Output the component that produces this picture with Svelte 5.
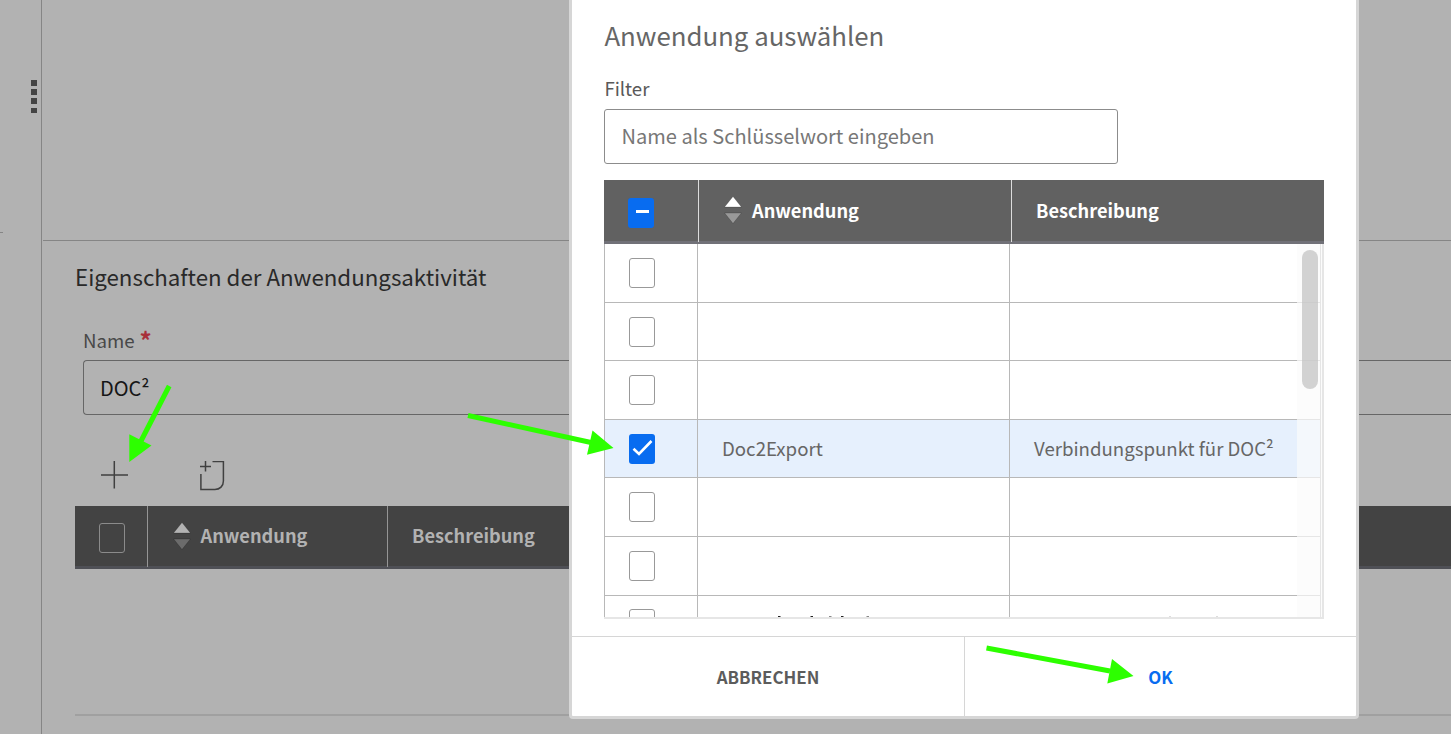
<script>
  const rows = [
    { h: 59 },
    { h: 58 },
    { h: 59 },
    { h: 58, name: 'Doc2Export', text: 'Verbindungspunkt für DOC²', checked: true },
    { h: 59 },
    { h: 59 },
    { h: 59, clipped: true }
  ];
</script>

{#snippet sorter()}
  <svg class="sorter" width="18" height="28" viewBox="0 0 18 28">
    <path class="down" d="M.6 17h16.800l-8.400 10.500z" />
    <path class="up" d="M.6 11h16.800L9 .5z" />
  </svg>
{/snippet}

<div class="page">
  <aside>
    <div class="grip"><i></i><i></i><i></i><i></i></div>
    <div class="tick"></div>
  </aside>
  <main>
    <div class="canvas"></div>
    <section class="props">
      <h2>Eigenschaften der Anwendungsaktivität</h2>
      <div class="field">
        <div class="label">Name <b>*</b></div>
        <div class="input">DOC²</div>
      </div>
      <div class="tools">
        <svg width="28" height="28" viewBox="0 0 28 28"><path d="M13.300 0v27.500M0 13.900h27" /></svg>
        <svg class="note" width="26" height="30" viewBox="0 0 26 30"><path d="M5.500 0v10.500M0 5.600h11M12.500 .6h10.900V20c0 5-3.500 8.500-8.500 8.500H.9V13" /></svg>
      </div>
      <div class="head">
        <div class="c1"><span class="box"></span></div>
        <div class="c2">{@render sorter()}<span>Anwendung</span></div>
        <div class="c3"><span>Beschreibung</span></div>
      </div>
      <div class="rule"></div>
    </section>
  </main>

  <div class="dialog">
    <div class="content">
      <h1>Anwendung auswählen</h1>
      <label for="filter">Filter</label>
      <input id="filter" placeholder="Name als Schlüsselwort eingeben" />
      <div class="table">
        <div class="thead">
          <div class="t1"><span class="box mixed"><i></i></span></div>
          <div class="t2">{@render sorter()}<span>Anwendung</span></div>
          <div class="t3"><span>Beschreibung</span></div>
        </div>
        <div class="tbody">
          {#each rows as r}
            <div class="row" class:sel={r.checked} style="height:{r.h}px">
              <div class="d1" class:raised={r.clipped}>
                <span class="box" class:on={r.checked}>
                  {#if r.checked}
                    <svg width="26" height="30" viewBox="0 0 26 30"><path d="M4.500 14.800l5.500 5.200L22.500 7" /></svg>
                  {/if}
                </span>
              </div>
              <div class="d2">
                {#if r.clipped}
                  <svg class="tips" width="311" height="21"><path d="M80 20.500h2.500M112.500 20.500h2.500M143 20.500h2.500" /><path class="soft" d="M131 20.500h2.500M168.500 20.500h2.500" /></svg>
                {:else}{r.name ?? ''}{/if}
              </div>
              <div class="d3">
                {#if r.clipped}
                  <svg class="tips faint" width="300" height="21"><path d="M159 20.500h2M206 20.500h2" /></svg>
                {:else}{r.text ?? ''}{/if}
              </div>
            </div>
          {/each}
          <div class="track"><div class="thumb"></div></div>
        </div>
      </div>
    </div>
    <footer>
      <button>ABBRECHEN</button>
      <button class="ok">OK</button>
    </footer>
  </div>

  <svg class="arrows" width="1451" height="734">
    <path class="shaft" d="M169.200 386L141 441M468 415.500L591 442.500M986.500 648L1110 671" />
    <path d="M129.300 434.300L151.500 445.500L129.300 462zM592.500 430.500L613.500 448L587 454.800zM1112 659L1133.500 676L1107.300 683.500z" />
  </svg>
</div>

<style>
  :global(body) { margin: 0; overflow: hidden; }
  * { box-sizing: border-box; }
  .page {
    position: relative; display: flex; width: 1451px; height: 734px; overflow: hidden;
    background: #b2b2b2; color: #404040;
    font-family: 'Noto Sans CJK SC', 'Noto Sans', sans-serif; font-size: 18.650px;
  }
  h1, h2 { margin: 0; font-weight: 400; white-space: nowrap; }
  aside { width: 42px; border-right: 1px solid #858585; padding-top: 80px; }
  .grip { display: flex; flex-direction: column; gap: 3.500px; margin-left: 31px; height: 152px; }
  .grip i { width: 5.800px; height: 5.700px; background: #444; }
  .tick { width: 3px; height: 1px; background: #858585; }
  main { flex: 1; min-width: 0; padding-left: 1px; display: flex; flex-direction: column; }
  .canvas { height: 241px; flex: none; border-bottom: 1px solid #858585; }
  .props { padding-left: 32px; }
  h2 { padding-top: 19px; height: 87px; font-size: 22.300px; line-height: 32px; color: #292929; }
  .field { padding-left: 8px; height: 87px; }
  .label { display: flex; gap: 5px; height: 32px; line-height: 24px; color: #484848; }
  .label b { color: #a8303a; font-size: 24px; font-weight: 700; line-height: 24px; }
  .input {
    height: 55px; border: 1px solid #666; border-right: 0; border-radius: 4px 0 0 4px;
    padding-left: 16px; line-height: 53px; color: #161616; font-size: 20px;
  }
  .tools { height: 91px; padding: 46px 0 0 26px; display: flex; align-items: flex-start; gap: 71px; }
  .tools path { fill: none; stroke: #404040; stroke-width: 1.500; }
  .head {
    display: flex; height: 63px; background: #434343; border-bottom: 3px solid #4f5056;
    color: #b2b2b2; font-size: 18.200px; font-weight: 700;
  }
  .head > div, .thead > div { display: flex; align-items: center; line-height: 60px; }
  .head > div + div { border-left: 1px solid #959595; margin-bottom: -1px; padding-bottom: 3px; }
  .head .c1 { width: 72px; padding: 3px 0 0 24px; }
  .c2 { width: 240px; padding-left: 25px; }
  .c3 { padding-left: 24px; }
  .sorter { margin-right: 10px; flex: none; }
  .head .sorter { margin: 2px 10px 0 -.5px; }
  .sorter path { stroke: #0004; stroke-width: .7; fill: #b2b2b2; }
  .sorter .down { fill: #6b6b6b; }
  .rule { height: 2px; background: #a0a0a0; margin-top: 145px; }
  .box {
    display: block; flex: none; width: 26px; height: 30px; border: 1px solid #999;
    border-radius: 3px; background: #fff;
  }
  .head .box { background: none; border-color: #8b8b8b; }
  .dialog {
    position: absolute; left: 569px; top: -10px; width: 790px; height: 729px;
    border: 3px solid #d6d6d6; border-radius: 4px; background: #fff; color: #666;
  }
  .content { height: 643px; padding: 26px 32px 0; }
  h1 { height: 57px; padding-left: .4px; line-height: 32px; font-size: 25.800px; color: #666; }
  label { display: block; height: 33px; padding-left: .4px; line-height: 24px; color: #595959; }
  input {
    display: block; width: 514px; height: 55px; border: 1px solid #8c8c8c; border-radius: 3px;
    padding: 0 17px 2px 16.500px; font: inherit; font-size: 20.050px; background: #fff;
  }
  input::placeholder { color: #777; opacity: 1; }
  .table { margin-top: 16px; width: 720px; }
  .thead {
    display: flex; height: 64px; background: #616161; border-bottom: 3px solid #717178;
    color: #fff; font-size: 18.200px; font-weight: 700;
  }
  .thead > div + div { border-left: 1px solid #dcdcdc; margin-bottom: -1px; padding-bottom: 3px; }
  .thead .up { fill: #fff; }
  .thead .down { fill: #999; }
  .thead .sorter { margin-top: 1px; }
  .t1 { width: 94px; padding: 4px 0 0 24px; }
  .t2 { width: 313px; padding-left: 25px; }
  .t3 { padding-left: 24px; }
  .mixed { background: #086cf0; border: 0; padding: 12px 0 0 8px; }
  .mixed i { display: block; width: 13px; height: 3px; background: #fff; }
  .tbody {
    position: relative; height: 375px; overflow: hidden;
    border-right: 2px solid #e6e6e6; border-bottom: 2px solid #e6e6e6;
  }
  .row { display: flex; width: 717px; border-bottom: 1px solid #b8b8b8; background: #fff; }
  .row.sel { background: #e6f0fd; }
  .row > div { border-left: 1px solid #b8b8b8; line-height: 56px; white-space: nowrap; }
  .d1 { width: 93px; padding: 14px 0 0 24px; }
  .d1.raised { padding-top: 13px; }
  .d2 { width: 312px; padding-left: 24px; }
  .row .d3 { flex: 1; padding-left: 24px; border-right: 1px solid #b8b8b8; }
  .tips { display: block; margin-left: -24px; }
  .tips path { stroke: #222; stroke-width: 1; }
  .tips .soft { stroke: #888; }
  .tips.faint path { stroke: #ddd; }
  .box.on { border: 0; background: #086cf0; }
  .box.on svg { display: block; }
  .box.on path { fill: none; stroke: #fff; stroke-width: 2.600; }
  .track {
    position: absolute; top: 0; right: 0; width: 25px; height: 100%;
    padding: 6px 0 0 5px; background: #fafafab0;
  }
  .thumb { width: 16px; height: 139px; border-radius: 8px; background: #c2c2c2b8; }
  footer { display: flex; height: 80px; border-top: 1px solid #d6d6d6; }
  button {
    width: 392px; border: 0; padding: 0; background: none; color: #5c5c5c;
    font: inherit; font-size: 16.900px; font-weight: 700; line-height: 30px;
  }
  button.ok { border-left: 1px solid #d6d6d6; color: #086cf0; }
  .arrows { position: absolute; inset: 0; pointer-events: none; fill: #2dff00; }
  .shaft { fill: none; stroke: #2dff00; stroke-width: 5; }
</style>
